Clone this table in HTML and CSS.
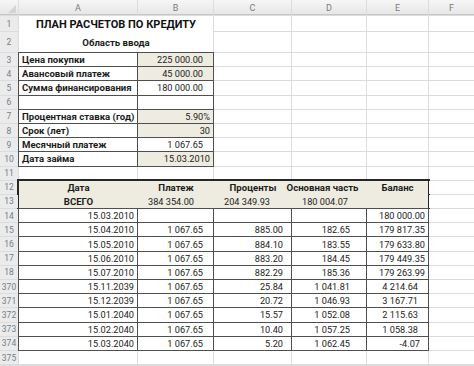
FILE: index.html
```html
<!DOCTYPE html>
<html lang="ru">
<head>
<meta charset="utf-8">
<title>План расчетов по кредиту</title>
<link rel="stylesheet" href="styles.css">
</head>
<body>
<div class="sheet">
  <div class="ch corner"><span class="tri"></span></div>
  <div class="ch">A</div><div class="ch">B</div><div class="ch">C</div><div class="ch">D</div><div class="ch">E</div><div class="ch">F</div>

  <div class="rh">1</div>
  <div class="titlebox">
    <div class="title">ПЛАН РАСЧЕТОВ ПО КРЕДИТУ</div>
    <div class="subtitle">Область ввода</div>
  </div>
  <div class="c"></div><div class="c"></div><div class="c"></div><div class="c"></div>
  <div class="rh">2</div>
  <div class="c"></div><div class="c"></div><div class="c"></div><div class="c"></div>

  <div class="rh">3</div>
  <div class="c b bold">Цена покупки</div><div class="c b tan r pr10">225 000.00</div>
  <div class="c"></div><div class="c"></div><div class="c"></div><div class="c"></div>
  <div class="rh">4</div>
  <div class="c b bold">Авансовый платеж</div><div class="c b tan r pr10">45 000.00</div>
  <div class="c"></div><div class="c"></div><div class="c"></div><div class="c"></div>
  <div class="rh">5</div>
  <div class="c b bold">Сумма финансирования</div><div class="c b r pr10">180 000.00</div>
  <div class="c"></div><div class="c"></div><div class="c"></div><div class="c"></div>
  <div class="rh">6</div>
  <div class="c b"></div><div class="c b"></div>
  <div class="c"></div><div class="c"></div><div class="c"></div><div class="c"></div>
  <div class="rh">7</div>
  <div class="c b bold">Процентная ставка (год)</div><div class="c b tan r">5.90%</div>
  <div class="c"></div><div class="c"></div><div class="c"></div><div class="c"></div>
  <div class="rh">8</div>
  <div class="c b bold">Срок (лет)</div><div class="c b tan r">30</div>
  <div class="c"></div><div class="c"></div><div class="c"></div><div class="c"></div>
  <div class="rh">9</div>
  <div class="c b bold">Месячный платеж</div><div class="c b r pr10">1 067.65</div>
  <div class="c"></div><div class="c"></div><div class="c"></div><div class="c"></div>
  <div class="rh">10</div>
  <div class="c b bold">Дата займа</div><div class="c b tan r">15.03.2010</div>
  <div class="c"></div><div class="c"></div><div class="c"></div><div class="c"></div>

  <div class="rh">11</div>
  <div class="c"></div><div class="c"></div><div class="c"></div><div class="c"></div><div class="c"></div><div class="c"></div>

  <div class="rh">12</div>
  <div class="headblock">
    <div class="hb bold center">Дата</div>
    <div class="hb bold center">Платеж</div>
    <div class="hb bold center">Проценты</div>
    <div class="hb bold center sh">Основная часть</div>
    <div class="hb bold center">Баланс</div>
    <div class="hb bold center">ВСЕГО</div>
    <div class="hb pl10">384 354.00</div>
    <div class="hb pl10">204 349.93</div>
    <div class="hb pl10">180 004.07</div>
    <div class="hb"></div>
  </div>
  <div class="c"></div>
  <div class="rh">13</div>
  <div class="c"></div>

  <div class="rh">14</div>
  <div class="c b r">15.03.2010</div><div class="c b r pb"></div><div class="c b r pc"></div><div class="c b r pd"></div><div class="c b r pe">180 000.00</div><div class="c"></div>
  <div class="rh">15</div>
  <div class="c b r">15.04.2010</div><div class="c b r pb">1 067.65</div><div class="c b r pc">885.00</div><div class="c b r pd">182.65</div><div class="c b r pe">179 817.35</div><div class="c"></div>
  <div class="rh">16</div>
  <div class="c b r">15.05.2010</div><div class="c b r pb">1 067.65</div><div class="c b r pc">884.10</div><div class="c b r pd">183.55</div><div class="c b r pe">179 633.80</div><div class="c"></div>
  <div class="rh">17</div>
  <div class="c b r">15.06.2010</div><div class="c b r pb">1 067.65</div><div class="c b r pc">883.20</div><div class="c b r pd">184.45</div><div class="c b r pe">179 449.35</div><div class="c"></div>
  <div class="rh">18</div>
  <div class="c b r">15.07.2010</div><div class="c b r pb">1 067.65</div><div class="c b r pc">882.29</div><div class="c b r pd">185.36</div><div class="c b r pe">179 263.99</div><div class="c"></div>
  <div class="rh">370</div>
  <div class="c b r">15.11.2039</div><div class="c b r pb">1 067.65</div><div class="c b r pc">25.84</div><div class="c b r pd">1 041.81</div><div class="c b r pe2">4 214.64</div><div class="c"></div>
  <div class="rh">371</div>
  <div class="c b r">15.12.2039</div><div class="c b r pb">1 067.65</div><div class="c b r pc">20.72</div><div class="c b r pd">1 046.93</div><div class="c b r pe2">3 167.71</div><div class="c"></div>
  <div class="rh">372</div>
  <div class="c b r">15.01.2040</div><div class="c b r pb">1 067.65</div><div class="c b r pc">15.57</div><div class="c b r pd">1 052.08</div><div class="c b r pe2">2 115.63</div><div class="c"></div>
  <div class="rh">373</div>
  <div class="c b r">15.02.2040</div><div class="c b r pb">1 067.65</div><div class="c b r pc">10.40</div><div class="c b r pd">1 057.25</div><div class="c b r pe2">1 058.38</div><div class="c"></div>
  <div class="rh">374</div>
  <div class="c b r">15.03.2040</div><div class="c b r pb">1 067.65</div><div class="c b r pc">5.20</div><div class="c b r pd">1 062.45</div><div class="c b r pe3">-4.07</div><div class="c"></div>
  <div class="rh">375</div>
  <div class="c"></div><div class="c"></div><div class="c"></div><div class="c"></div><div class="c"></div><div class="c"></div>
</div>
</body>
</html>
```

FILE: styles.css
```css
html, body {
  margin: 0;
  padding: 0;
  background: #ffffff;
}

body {
  width: 474px;
  height: 366px;
  overflow: hidden;
  font-family: Roboto, "Noto Sans", sans-serif;
  font-size: 9.2px;
  color: #1c1c1c;
}

.sheet {
  display: grid;
  grid-template-columns: 18px 118px 75px 77px 74px 61px 1fr;
  grid-template-rows: 15px 15px 20px repeat(22, 13.2px);
  gap: 1px;
  background: #dadcdd;
  width: 474px;
  height: 366px;
  overflow: hidden;
}

.sheet > div {
  min-width: 0;
}

.ch {
  background: linear-gradient(#f6f6f6, #e6e6e6);
  color: #7a7a7a;
  display: flex;
  align-items: center;
  justify-content: center;
  font-size: 9px;
  box-shadow: inset 0 -1px 0 #c6c6c6;
}

.corner {
  position: relative;
}

.tri {
  position: absolute;
  right: 2px;
  bottom: 2px;
  width: 0;
  height: 0;
  border-left: 8px solid transparent;
  border-bottom: 8px solid #d4d4d4;
}

.rh {
  background: #ebebeb;
  color: #72808c;
  display: flex;
  align-items: center;
  justify-content: center;
  font-size: 8.5px;
}

.c {
  background: #ffffff;
  display: flex;
  align-items: center;
  padding: 0 3px;
  white-space: nowrap;
}

.b {
  outline: 1px solid #4f4f4f;
}

.tan {
  background: #eeece1;
}

.bold {
  font-weight: 700;
  font-size: 9.6px;
}

.r {
  justify-content: flex-end;
}

.center {
  justify-content: center;
}

.pr10 { padding-right: 10px; }
.pb { padding-right: 10px; }
.pc { padding-right: 8px; }
.pd { padding-right: 16px; }
.pe { padding-right: 3px; }
.pe2 { padding-right: 10px; }
.pe3 { padding-right: 8px; }

.titlebox {
  grid-column: 2 / 4;
  grid-row: 2 / 4;
  background: #ffffff;
  display: grid;
  grid-template-rows: 16px 20px;
}

.title {
  display: flex;
  align-items: center;
  justify-content: center;
  font-weight: 700;
  font-size: 11px;
  color: #111;
}

.subtitle {
  display: flex;
  align-items: flex-end;
  justify-content: center;
  padding-bottom: 4px;
  font-weight: 700;
  font-size: 9.6px;
}

.headblock {
  grid-column: 2 / 7;
  grid-row: 13 / 15;
  background: #eeece1;
  outline: 2px solid #262626;
  display: grid;
  grid-template-columns: 119px 76px 78px 75px 61px;
  grid-template-rows: 1fr 1fr;
}

.hb {
  display: flex;
  align-items: center;
  white-space: nowrap;
}

.sh {
  padding-right: 14px;
}

.pl10 {
  padding-left: 10px;
}
```
